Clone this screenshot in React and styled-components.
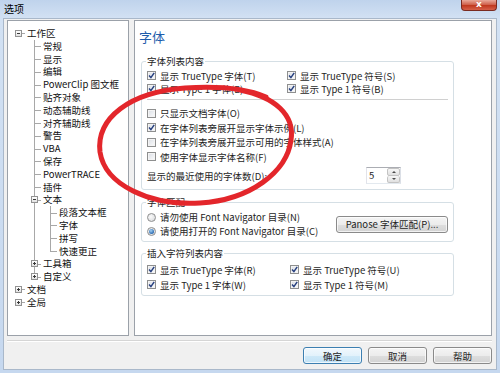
import styled, { createGlobalStyle } from "styled-components";

/* ---------- global ---------- */
const GlobalStyle = createGlobalStyle`
  html, body {
    margin: 0;
    padding: 0;
  }
  body {
    width: 500px;
    height: 373px;
    overflow: hidden;
    background: #c4d7ee;
    font-family: "Noto Sans CJK SC", "Noto Sans", sans-serif;
    color: #1e1e1e;
  }
`;

/* ---------- window frame ---------- */
const Window = styled.div`
  position: relative;
  width: 500px;
  height: 373px;
  box-sizing: border-box;
  display: flex;
  flex-direction: column;
  background: linear-gradient(to bottom, #bfd3ec 0px, #d2e1f3 18px, #c6d8ef 100%);
`;

const TitleBar = styled.div`
  height: 18px;
  flex: none;
  display: flex;
  justify-content: space-between;
  align-items: flex-start;
  padding: 0 3px 0 4px;
`;

const Title = styled.span`
  font-size: 10px;
  line-height: 17px;
  color: #000;
`;

const CloseButton = styled.span`
  width: 36px;
  height: 11px;
  box-sizing: border-box;
  border: 1px solid #7a2b20;
  border-top: none;
  border-radius: 0 0 4px 4px;
  background: linear-gradient(to bottom, #e9a99a 0%, #d0634e 45%, #c0391f 55%, #d6604a 100%);
  color: #fff;
  font-size: 9px;
  font-weight: bold;
  line-height: 9px;
  text-align: center;
  font-family: "DejaVu Sans", sans-serif;
`;

const Client = styled.div`
  flex: 1;
  margin: 0 3px 3px 3px;
  background: #f0f0f0;
  border: 1px solid #a9b8ca;
  display: flex;
  flex-direction: column;
`;

const Main = styled.div`
  display: flex;
  gap: 5px;
  padding: 1px 4px 0 3px;
  height: 316px;
`;

/* ---------- tree ---------- */
const TreePanel = styled.div`
  width: 122px;
  flex: none;
  box-sizing: border-box;
  background: #fff;
  border: 1px solid #9ba1a9;
  padding: 6px 0 0 2px;
  overflow: hidden;
`;

const TreeLine = styled.div`
  display: flex;
  height: 12.8px;
  font-size: 9.5px;
  line-height: 12.8px;
  white-space: nowrap;
`;

const Guide = styled.span`
  position: relative;
  width: 16px;
  flex: none;
  &::before {
    content: "";
    display: ${({ $line }) => ($line ? "block" : "none")};
    position: absolute;
    left: 8px;
    top: 0;
    bottom: 0;
    border-left: 1px solid #a8a8a8;
  }
`;

const Expander = styled.span`
  position: relative;
  width: 16px;
  flex: none;
  &::before {
    content: "";
    display: ${({ $level }) => ($level === 0 ? "none" : "block")};
    position: absolute;
    left: 8px;
    top: 0;
    bottom: ${({ $last }) => ($last ? "50%" : "0")};
    border-left: 1px solid #a8a8a8;
  }
  &::after {
    content: "";
    position: absolute;
    left: 8px;
    right: 1px;
    top: 50%;
    border-top: 1px solid #a8a8a8;
  }
`;

const ToggleBox = styled.span`
  position: absolute;
  z-index: 1;
  left: 5px;
  top: 3px;
  width: 7px;
  height: 7px;
  box-sizing: border-box;
  border: 1px solid #929292;
  background: linear-gradient(to bottom, #ffffff, #e2e2e2);
  &::before {
    content: "";
    position: absolute;
    left: 1px;
    top: 2px;
    width: 3px;
    height: 1px;
    background: #3a3a3a;
  }
  &::after {
    content: "";
    display: ${({ $open }) => ($open ? "none" : "block")};
    position: absolute;
    left: 2px;
    top: 1px;
    width: 1px;
    height: 3px;
    background: #3a3a3a;
  }
`;

const TreeLabel = styled.span`
  padding-left: 1px;
  color: #111;
`;

const treeItems = [
  { label: "工作区", level: 0, toggle: "minus" },
  { label: "常规", level: 1 },
  { label: "显示", level: 1 },
  { label: "编辑", level: 1 },
  { label: "PowerClip 图文框", level: 1 },
  { label: "贴齐对象", level: 1 },
  { label: "动态辅助线", level: 1 },
  { label: "对齐辅助线", level: 1 },
  { label: "警告", level: 1 },
  { label: "VBA", level: 1 },
  { label: "保存", level: 1 },
  { label: "PowerTRACE", level: 1 },
  { label: "插件", level: 1 },
  { label: "文本", level: 1, toggle: "minus" },
  { label: "段落文本框", level: 2 },
  { label: "字体", level: 2 },
  { label: "拼写", level: 2 },
  { label: "快速更正", level: 2, last: true },
  { label: "工具箱", level: 1, toggle: "plus" },
  { label: "自定义", level: 1, toggle: "plus", last: true },
  { label: "文档", level: 0, toggle: "plus" },
  { label: "全局", level: 0, toggle: "plus" },
];

function TreeRow({ item }) {
  return (
    <TreeLine>
      {item.level > 0 && <Guide />}
      {item.level > 1 && <Guide $line />}
      <Expander $level={item.level} $last={item.last}>
        {item.toggle && <ToggleBox $open={item.toggle === "minus"} />}
      </Expander>
      <TreeLabel>{item.label}</TreeLabel>
    </TreeLine>
  );
}

/* ---------- right page ---------- */
const Page = styled.div`
  flex: 1;
  box-sizing: border-box;
  background: #fff;
  border: 1px solid #9ba1a9;
  padding: 9px 0 0 0;
`;

const Heading = styled.div`
  font-size: 13px;
  line-height: 14px;
  color: #1f5dab;
  padding-left: 4px;
`;

const Group = styled.fieldset`
  margin: ${({ $top }) => $top}px 0 0 6px;
  width: 313px;
  box-sizing: border-box;
  border: 1px solid #d5dfe5;
  border-radius: 3px;
  padding: ${({ $pad }) => $pad};
  min-width: 0;
`;

const Legend = styled.legend`
  padding: 0 1px;
  margin-left: -1px;
  font-size: 9.5px;
  line-height: 12px;
  color: #1e1e1e;
`;

const Columns = styled.div`
  display: grid;
  grid-template-columns: ${({ $first }) => $first}px 1fr;
`;

const Option = styled.label`
  display: flex;
  align-items: center;
  gap: 4px;
  height: ${({ $h }) => $h || 13}px;
  font-size: 9.5px;
  white-space: nowrap;
`;

const Box = styled.span`
  width: 9px;
  height: 9px;
  flex: none;
  box-sizing: border-box;
  border: 1px solid #8e8f8f;
  background: linear-gradient(135deg, #d9dde3 0%, #eef0f3 60%, #fbfbfb 100%);
  box-shadow: inset 0 0 0 1px #f4f4f4;
  display: flex;
  align-items: center;
  justify-content: center;
`;

const Round = styled.span`
  width: 9px;
  height: 9px;
  flex: none;
  box-sizing: border-box;
  border-radius: 50%;
  border: 1px solid #8e8f8f;
  background: radial-gradient(circle at 40% 40%, #fafafa, #d4d6d9);
  display: flex;
  align-items: center;
  justify-content: center;
  &::after {
    content: "";
    display: ${({ $on }) => ($on ? "block" : "none")};
    width: 5px;
    height: 5px;
    border-radius: 50%;
    background: radial-gradient(circle at 40% 35%, #a6d2f3, #2b6bb3 70%, #1d4f8f);
  }
`;

const Separator = styled.div`
  border-top: 1px solid #d0d0d0;
  margin: ${({ $m }) => $m};
`;

const CountRow = styled.div`
  display: flex;
  align-items: center;
  height: 17px;
  margin-top: 3px;
  font-size: 9.5px;
`;

const Spinner = styled.div`
  margin-left: auto;
  margin-right: 47px;
  width: 35px;
  height: 17px;
  box-sizing: border-box;
  border: 1px solid #abadb3;
  border-color: #abadb3 #dbdfe6 #e3e9ef #e2e3ea;
  display: flex;
  background: #fff;
`;

const SpinValue = styled.span`
  flex: 1;
  padding-left: 2px;
  font-size: 9.5px;
  line-height: 15px;
`;

const SpinButtons = styled.span`
  width: 13px;
  display: flex;
  flex-direction: column;
`;

const SpinButton = styled.span`
  flex: 1;
  box-sizing: border-box;
  border: 1px solid #c3c3c3;
  border-top-width: ${({ $down }) => ($down ? 0 : 1)}px;
  border-radius: 2px;
  background: linear-gradient(to bottom, #f7f7f7, #e0e0e0);
  display: flex;
  align-items: center;
  justify-content: center;
  &::after {
    content: "";
    border-left: 2px solid transparent;
    border-right: 2px solid transparent;
    border-${({ $down }) => ($down ? "top" : "bottom")}: 2px solid #4a4a4a;
  }
`;

const MatchRow = styled.div`
  display: flex;
  align-items: center;
  justify-content: space-between;
`;

const Button = styled.button`
  width: ${({ $w }) => $w || 59}px;
  height: 17px;
  box-sizing: border-box;
  padding: 0;
  font-family: inherit;
  font-size: 9.5px;
  color: #1e1e1e;
  border: 1px solid ${({ $default }) => ($default ? "#3c7fb1" : "#8a8a8a")};
  border-radius: 3px;
  background: ${({ $default }) =>
    $default
      ? "linear-gradient(to bottom, #f1f8fd 0%, #e3f2fb 50%, #cfe9f8 51%, #c1e2f6 100%)"
      : "linear-gradient(to bottom, #f4f4f4 0%, #ececec 50%, #dedede 51%, #d3d3d3 100%)"};
  box-shadow: inset 0 0 0 1px rgba(255, 255, 255, 0.7);
`;

/* ---------- footer ---------- */
const Footer = styled.div`
  padding: 4px 4px 0 3px;
`;

const Etched = styled.div`
  border-top: 1px solid #d5d5d5;
  border-bottom: 1px solid #fff;
`;

const ButtonRow = styled.div`
  display: flex;
  justify-content: flex-end;
  gap: 6px;
  margin-top: 5px;
`;

/* ---------- marker drawn over the screenshot ---------- */
const Marker = styled.svg`
  position: absolute;
  left: 0;
  top: 0;
  pointer-events: none;
`;

function CheckMark() {
  return (
    <svg width="7" height="7" viewBox="0 0 7 7">
      <path d="M1 3.6 L2.9 5.6 L6.2 0.8" fill="none" stroke="#27407f" strokeWidth="1.5" />
    </svg>
  );
}

function CheckOption({ checked, children, h }) {
  return (
    <Option $h={h}>
      <Box>{checked && <CheckMark />}</Box>
      {children}
    </Option>
  );
}

function RadioOption({ on, children }) {
  return (
    <Option $h={14}>
      <Round $on={on} />
      {children}
    </Option>
  );
}

export default function App() {
  return (
    <>
      <GlobalStyle />
      <Window>
        <TitleBar>
          <Title>选项</Title>
          <CloseButton>x</CloseButton>
        </TitleBar>
        <Client>
          <Main>
            <TreePanel>
              {treeItems.map((item) => (
                <TreeRow key={item.label} item={item} />
              ))}
            </TreePanel>
            <Page>
              <Heading>字体</Heading>

              <Group $top={11} $pad="2px 5px 5px">
                <Legend>字体列表内容</Legend>
                <Columns $first={140}>
                  <CheckOption checked>显示 TrueType 字体(T)</CheckOption>
                  <CheckOption checked>显示 TrueType 符号(S)</CheckOption>
                  <CheckOption checked>显示 Type 1 字体(E)</CheckOption>
                  <CheckOption checked>显示 Type 1 符号(B)</CheckOption>
                </Columns>
                <Separator $m="4px 0 6px" />
                <CheckOption h={14.5}>只显示文档字体(O)</CheckOption>
                <CheckOption h={14.5} checked>在字体列表旁展开显示字体示例(L)</CheckOption>
                <CheckOption h={14.5}>在字体列表旁展开显示可用的字体样式(A)</CheckOption>
                <CheckOption h={14.5}>使用字体显示字体名称(F)</CheckOption>
                <CountRow>
                  显示的最近使用的字体数(D):
                  <Spinner>
                    <SpinValue>5</SpinValue>
                    <SpinButtons>
                      <SpinButton />
                      <SpinButton $down />
                    </SpinButtons>
                  </Spinner>
                </CountRow>
              </Group>

              <Group $top={6} $pad="2px 5px 3px">
                <Legend>字体匹配</Legend>
                <MatchRow>
                  <div>
                    <RadioOption>请勿使用 Font Navigator 目录(N)</RadioOption>
                    <RadioOption on>请使用打开的 Font Navigator 目录(C)</RadioOption>
                  </div>
                  <Button $w={112}>Panose 字体匹配(P)...</Button>
                </MatchRow>
              </Group>

              <Group $top={5} $pad="3px 5px 3px">
                <Legend>插入字符列表内容</Legend>
                <Columns $first={143}>
                  <CheckOption h={15} checked>显示 TrueType 字体(R)</CheckOption>
                  <CheckOption h={15} checked>显示 TrueType 符号(U)</CheckOption>
                  <CheckOption h={15} checked>显示 Type 1 字体(W)</CheckOption>
                  <CheckOption h={15} checked>显示 Type 1 符号(M)</CheckOption>
                </Columns>
              </Group>
            </Page>
          </Main>
          <Footer>
            <Etched />
            <ButtonRow>
              <Button $default>确定</Button>
              <Button>取消</Button>
              <Button>帮助</Button>
            </ButtonRow>
          </Footer>
        </Client>
        <Marker width="500" height="373" viewBox="0 0 500 373">
          <path
            d="M240 90 C275 97, 295 115, 291 140 C287 172, 250 200, 200 203 C150 206, 105 185, 100 152 C96 118, 130 92, 185 88 C215 86, 245 88, 266 97"
            fill="none"
            stroke="#e3262b"
            strokeWidth="5"
            strokeLinecap="round"
          />
        </Marker>
      </Window>
    </>
  );
}
